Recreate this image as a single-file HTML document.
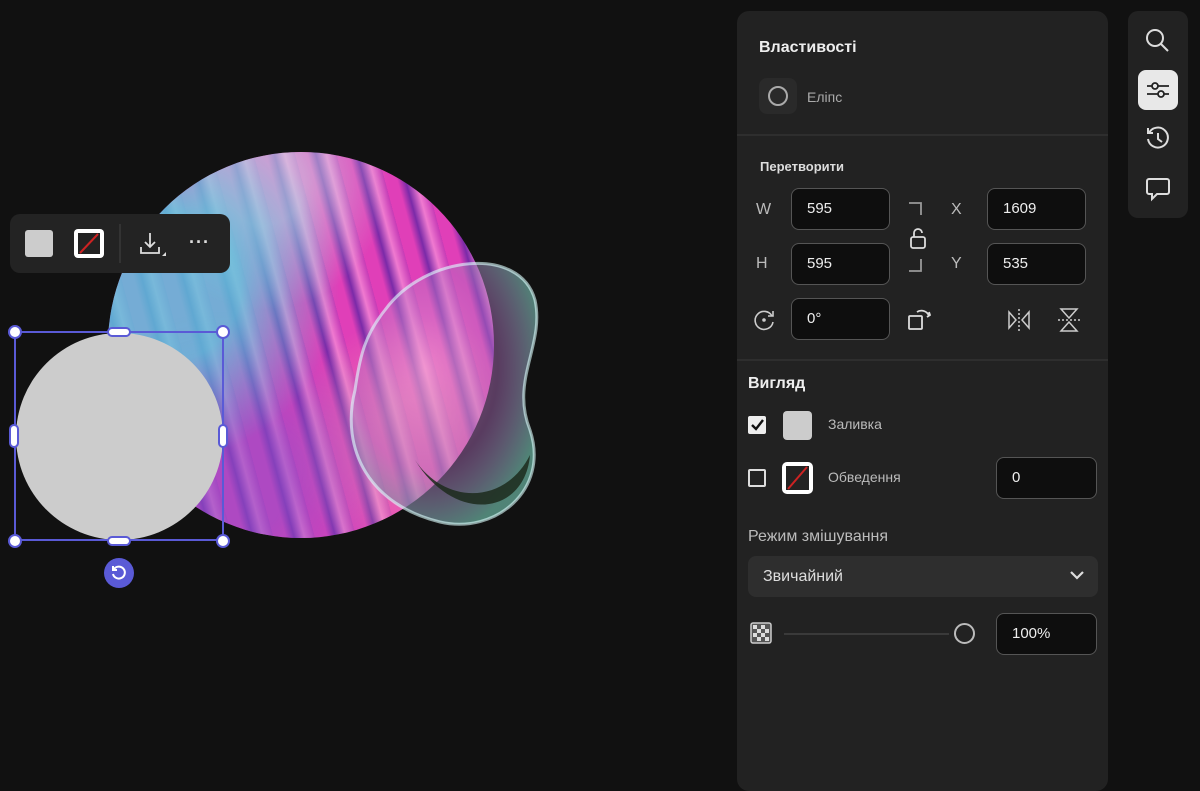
<!DOCTYPE html>
<html><head><meta charset="utf-8"><style>
*{box-sizing:border-box;margin:0;padding:0}
body{width:1200px;height:775px;background:#111;overflow:hidden;position:relative;font-family:"Liberation Sans","DejaVu Sans",sans-serif;color:#ddd}
.a{position:absolute}
.panel{left:737px;top:11px;width:371px;height:780px;background:#222;border-radius:12px}
.tb{left:1128px;top:11px;width:60px;height:207px;background:#222;border-radius:10px}
.inp{position:absolute;background:#0e0e0e;border:1px solid #555;border-radius:8px;color:#eee;font-size:15px;padding-left:15px;line-height:40px;height:42px}
.lbl{position:absolute;color:#bbb;font-size:16px}
.sep{position:absolute;left:0;width:371px;height:2px;background:#2e2e2e}
</style></head><body>
<!-- sphere -->
<div class="a" style="left:108px;top:152px;width:386px;height:386px;border-radius:50%;background:
repeating-linear-gradient(75deg,#e03fb8 0 12px,#7a2aa8 20px,#f07ad0 30px,#c63bb6 40px),#c040b0;"></div>
<div class="a" style="left:108px;top:152px;width:386px;height:386px;border-radius:50%;background:radial-gradient(circle at 15% 35%,rgba(90,200,220,.8) 0 18%,transparent 42%),radial-gradient(circle at 30% 85%,rgba(140,80,200,.6) 0 15%,transparent 40%),radial-gradient(circle at 40% 8%,rgba(200,220,230,.6) 0 10%,transparent 30%),radial-gradient(circle at 80% 75%,rgba(255,190,170,.35) 0 10%,transparent 30%)"></div>
<!-- bubble -->
<svg class="a" style="left:345px;top:260px" width="200" height="275" viewBox="0 0 200 275">
<defs><radialGradient id="bg" cx="40%" cy="40%" r="65%"><stop offset="0" stop-color="#f0a0d8" stop-opacity=".55"/><stop offset=".6" stop-color="#b070c0" stop-opacity=".45"/><stop offset="1" stop-color="#60a090" stop-opacity=".8"/></radialGradient></defs>
<path d="M40 50 C80 -5 175 -15 190 40 C200 85 165 120 185 170 C205 230 150 275 95 262 C25 245 -5 190 10 130 C15 95 20 75 40 50Z" fill="url(#bg)" stroke="#dff" stroke-opacity=".6" stroke-width="3"/>
<path d="M70 200 C100 245 160 245 185 195 C180 255 110 265 70 200Z" fill="#1c2a1c" opacity=".85"/>
</svg>
<!-- toolbar -->
<div class="a" style="left:10px;top:214px;width:220px;height:59px;background:#232323;border-radius:10px"></div>
<div class="a" style="left:25px;top:230px;width:28px;height:27px;background:#ccc;border-radius:3px"></div>
<div class="a" style="left:74px;top:229px;width:30px;height:29px;background:#fff;border-radius:4px;padding:4px"><svg width="22" height="21"><rect width="22" height="21" fill="#222"/><line x1="2" y1="20" x2="20" y2="1" stroke="#c22" stroke-width="2"/></svg></div>
<div class="a" style="left:119px;top:224px;width:2px;height:39px;background:#333"></div>
<svg class="a" style="left:139px;top:232px" width="28" height="28" fill="none" stroke="#ddd" stroke-width="1.8"><path d="M11 1v14M6 10l5 5 5-5M2 15v6h18v-6"/><path d="M23 24l4 0 0-4z" fill="#ddd" stroke="none"/></svg>
<div class="a" style="left:189px;top:232px;color:#ddd;font-size:18px;letter-spacing:1px;font-weight:bold">···</div>
<!-- selection -->
<div class="a" style="left:16px;top:333px;width:207px;height:207px;border-radius:50%;background:#ccc"></div>
<div class="a" style="left:14px;top:331px;width:210px;height:210px;border:2px solid #5a5ad6"></div>
<div class="a" style="left:8px;top:325px;width:14px;height:14px;border-radius:50%;background:#fff;border:2px solid #5a5ad6"></div>
<div class="a" style="left:216px;top:325px;width:14px;height:14px;border-radius:50%;background:#fff;border:2px solid #5a5ad6"></div>
<div class="a" style="left:8px;top:534px;width:14px;height:14px;border-radius:50%;background:#fff;border:2px solid #5a5ad6"></div>
<div class="a" style="left:216px;top:534px;width:14px;height:14px;border-radius:50%;background:#fff;border:2px solid #5a5ad6"></div>
<div class="a" style="left:107px;top:327px;width:24px;height:10px;border-radius:5px;background:#fff;border:2px solid #5a5ad6"></div>
<div class="a" style="left:107px;top:536px;width:24px;height:10px;border-radius:5px;background:#fff;border:2px solid #5a5ad6"></div>
<div class="a" style="left:9px;top:424px;width:10px;height:24px;border-radius:5px;background:#fff;border:2px solid #5a5ad6"></div>
<div class="a" style="left:218px;top:424px;width:10px;height:24px;border-radius:5px;background:#fff;border:2px solid #5a5ad6"></div>
<div class="a" style="left:104px;top:558px;width:30px;height:30px;border-radius:50%;background:#5a5ad6"></div>
<svg class="a" style="left:110px;top:564px" width="18" height="18" fill="none" stroke="#fff" stroke-width="2"><path d="M4 5a6 6 0 1 1 -1 5"/><path d="M3 2v4h4"/></svg>
<!-- panel -->
<div class="a panel">
 <div class="a" style="left:22px;top:28px;font-size:16px;font-weight:bold;color:#eee">Властивості</div>
 <div class="a" style="left:22px;top:67px;width:38px;height:36px;background:#2a2a2a;border-radius:8px"></div>
 <div class="a" style="left:31px;top:75px;width:20px;height:20px;border-radius:50%;border:2px solid #aaa"></div>
 <div class="a" style="left:70px;top:78px;font-size:14px;color:#aaa">Еліпс</div>
 <div class="sep" style="top:123px"></div>
 <div class="a" style="left:23px;top:148px;font-size:13px;font-weight:bold;color:#ddd">Перетворити</div>
 <div class="lbl" style="left:19px;top:190px">W</div>
 <div class="lbl" style="left:19px;top:244px">H</div>
 <div class="inp" style="left:54px;top:177px;width:99px">595</div>
 <div class="inp" style="left:54px;top:232px;width:99px">595</div>
 <div class="inp" style="left:54px;top:287px;width:99px">0°</div>
 <div class="lbl" style="left:214px;top:190px">X</div>
 <div class="lbl" style="left:214px;top:244px">Y</div>
 <div class="inp" style="left:250px;top:177px;width:99px">1609</div>
 <div class="inp" style="left:250px;top:232px;width:99px">535</div>
 <svg class="a" style="left:168px;top:190px" width="25" height="72" fill="none" stroke="#999" stroke-width="1.8"><path d="M4 2h12v12M4 70h12v-12"/><rect x="6" y="36" width="14" height="11" rx="2" stroke="#ddd"/><path d="M9 36v-4a4 4 0 0 1 8 0" stroke="#ddd"/></svg>
 <svg class="a" style="left:16px;top:297px" width="24" height="24" fill="none" stroke="#ccc" stroke-width="1.6"><path d="M19 8a9 9 0 1 0 1 6"/><path d="M20 3v5h-5"/><circle cx="11" cy="12" r="1" fill="#ccc"/></svg>
 <svg class="a" style="left:170px;top:295px" width="26" height="26" fill="none" stroke="#ddd" stroke-width="1.8"><rect x="2" y="10" width="13" height="13" rx="1"/><path d="M10 6a8 8 0 0 1 12 4M20 11l3-2-1-3"/></svg>
 <svg class="a" style="left:270px;top:297px" width="24" height="24" fill="none" stroke="#ccc" stroke-width="1.5"><path d="M2 4l7 8-7 8zM22 4l-7 8 7 8z"/><path d="M12 1v22" stroke-dasharray="2 2"/></svg>
 <svg class="a" style="left:320px;top:296px" width="24" height="26" fill="none" stroke="#ccc" stroke-width="1.5"><path d="M4 2h16l-8 9zM4 24h16l-8-9z"/><path d="M1 13h22" stroke-dasharray="2 2"/></svg>
 <div class="sep" style="top:348px"></div>
 <div class="a" style="left:11px;top:364px;font-size:16px;font-weight:bold;color:#eee">Вигляд</div>
 <div class="a" style="left:11px;top:405px;width:18px;height:18px;background:#eee;border-radius:2px"></div>
 <svg class="a" style="left:11px;top:405px" width="18" height="18" fill="none" stroke="#111" stroke-width="2.4"><path d="M4 9l4 4 7-9"/></svg>
 <div class="a" style="left:46px;top:400px;width:29px;height:29px;background:#ccc;border-radius:4px"></div>
 <div class="a" style="left:91px;top:405px;font-size:14px;color:#bbb">Заливка</div>
 <div class="a" style="left:11px;top:458px;width:18px;height:18px;border:2px solid #ddd;border-radius:2px"></div>
 <div class="a" style="left:45px;top:451px;width:31px;height:32px;background:#fff;border-radius:5px;padding:4px"><svg width="23" height="24"><rect width="23" height="24" fill="#222"/><line x1="2" y1="23" x2="21" y2="1" stroke="#c22" stroke-width="2"/></svg></div>
 <div class="a" style="left:91px;top:458px;font-size:14px;color:#bbb">Обведення</div>
 <div class="inp" style="left:259px;top:446px;width:101px;height:42px">0</div>
 <div class="a" style="left:11px;top:517px;font-size:16px;color:#bbb">Режим змішування</div>
 <div class="a" style="left:11px;top:545px;width:350px;height:41px;background:#2e2e2e;border-radius:8px;color:#ddd;font-size:16px;padding:12px 15px">Звичайний</div>
 <svg class="a" style="left:332px;top:558px" width="16" height="12" fill="none" stroke="#ddd" stroke-width="2.2"><path d="M2 3l6 6 6-6"/></svg>
 <svg class="a" style="left:13px;top:611px" width="22" height="22"><rect x="1" y="1" width="20" height="20" rx="2" fill="#555" stroke="#ccc" stroke-width="1.5"/><g fill="#ddd"><rect x="3" y="3" width="4" height="4"/><rect x="11" y="3" width="4" height="4"/><rect x="7" y="7" width="4" height="4"/><rect x="15" y="7" width="4" height="4"/><rect x="3" y="11" width="4" height="4"/><rect x="11" y="11" width="4" height="4"/><rect x="7" y="15" width="4" height="4"/><rect x="15" y="15" width="4" height="4"/></g></svg>
 <div class="a" style="left:47px;top:622px;width:165px;height:2px;background:#3a3a3a"></div>
 <div class="a" style="left:217px;top:612px;width:21px;height:21px;border-radius:50%;border:2.5px solid #bbb"></div>
 <div class="inp" style="left:259px;top:602px;width:101px;height:42px">100%</div>
</div>
<!-- right toolbar -->
<div class="a tb"></div>
<svg class="a" style="left:1145px;top:28px" width="26" height="26" fill="none" stroke="#ddd" stroke-width="2"><circle cx="10" cy="10" r="8"/><path d="M16 16l7 7"/></svg>
<div class="a" style="left:1138px;top:70px;width:40px;height:40px;background:#e8e8e8;border-radius:8px"></div>
<svg class="a" style="left:1146px;top:78px" width="24" height="24" fill="none" stroke="#222" stroke-width="1.8"><path d="M1 8h22M1 16h22"/><circle cx="9" cy="8" r="3" fill="#e8e8e8"/><circle cx="15" cy="16" r="3" fill="#e8e8e8"/></svg>
<svg class="a" style="left:1145px;top:126px" width="26" height="26" fill="none" stroke="#ddd" stroke-width="2"><path d="M4 7a10 10 0 1 1 -1 6"/><path d="M3 2v5h5M13 7v6l4 3"/></svg>
<svg class="a" style="left:1146px;top:177px" width="24" height="26" fill="none" stroke="#ddd" stroke-width="2"><path d="M3 2h18a2 2 0 0 1 2 2v11a2 2 0 0 1-2 2H11l-5 5v-5H3a2 2 0 0 1-2-2V4a2 2 0 0 1 2-2z"/></svg>
</body></html>
